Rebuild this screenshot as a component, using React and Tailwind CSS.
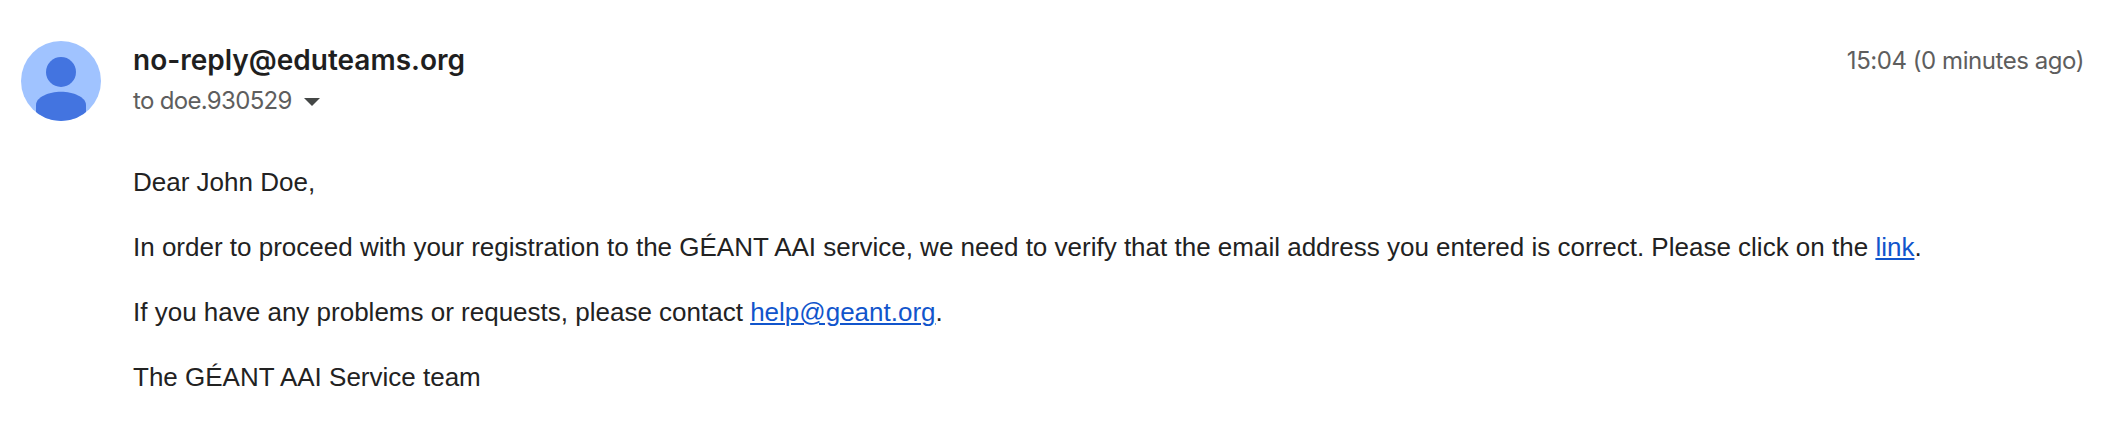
const sender = {
  email: 'no-reply@eduteams.org',
  recipient: 'doe.930529',
  time: '15:04 (0 minutes ago)',
};

function Avatar() {
  return (
    <svg className="w-20 h-20 shrink-0" viewBox="0 0 80 80">
      <defs>
        <clipPath id="avatar-clip">
          <circle cx="40" cy="40" r="40" />
        </clipPath>
      </defs>
      <circle cx="40" cy="40" r="40" fill="#a0c3ff" />
      <g clipPath="url(#avatar-clip)" fill="#4374e0">
        <circle cx="40" cy="31" r="15" />
        <path d="M15 80V64C15 56 28 50.7 40 50.7S65 56 65 64V80Z" />
      </g>
    </svg>
  );
}

function Link({ children }) {
  return (
    <a href="#" className="text-[#1155cc] underline decoration-2 underline-offset-2">
      {children}
    </a>
  );
}

export default function App() {
  return (
    <div className="min-h-screen bg-white flex pl-[21px] pr-[17px] pt-[41px] whitespace-nowrap">
      <Avatar />
      <div className="flex-1 ml-8">
        <header className="flex justify-between font-[Inter,sans-serif]">
          <div>
            <h3 className="text-[28px] leading-[38px] font-semibold text-[#1f1f1f]">
              {sender.email}
            </h3>
            <div className="flex items-center mt-0.5 text-2xl leading-10 text-[#5e5e5e]">
              <span className="tracking-[-0.68px]">to {sender.recipient}</span>
              <svg className="w-4 h-2 ml-3 mt-0.5" viewBox="0 0 16 8">
                <path d="M0 0h16L8 8z" fill="#444746" />
              </svg>
            </div>
          </div>
          <span className="text-2xl leading-10 tracking-[-0.45px] text-[#5e5e5e]">{sender.time}</span>
        </header>

        <div className="mt-[46px] font-['Liberation_Sans',sans-serif] text-[26px] leading-[30px] text-[#222222] space-y-[35px]">
          <p>Dear John Doe,</p>
          <p>
            In order to proceed with your registration to the GÉANT AAI service, we need to verify that
            the email address you entered is correct. Please click on the <Link>link</Link>.
          </p>
          <p>
            If you have any problems or requests, please contact <Link>help@geant.org</Link>.
          </p>
          <p>The GÉANT AAI Service team</p>
        </div>
      </div>
    </div>
  );
}
